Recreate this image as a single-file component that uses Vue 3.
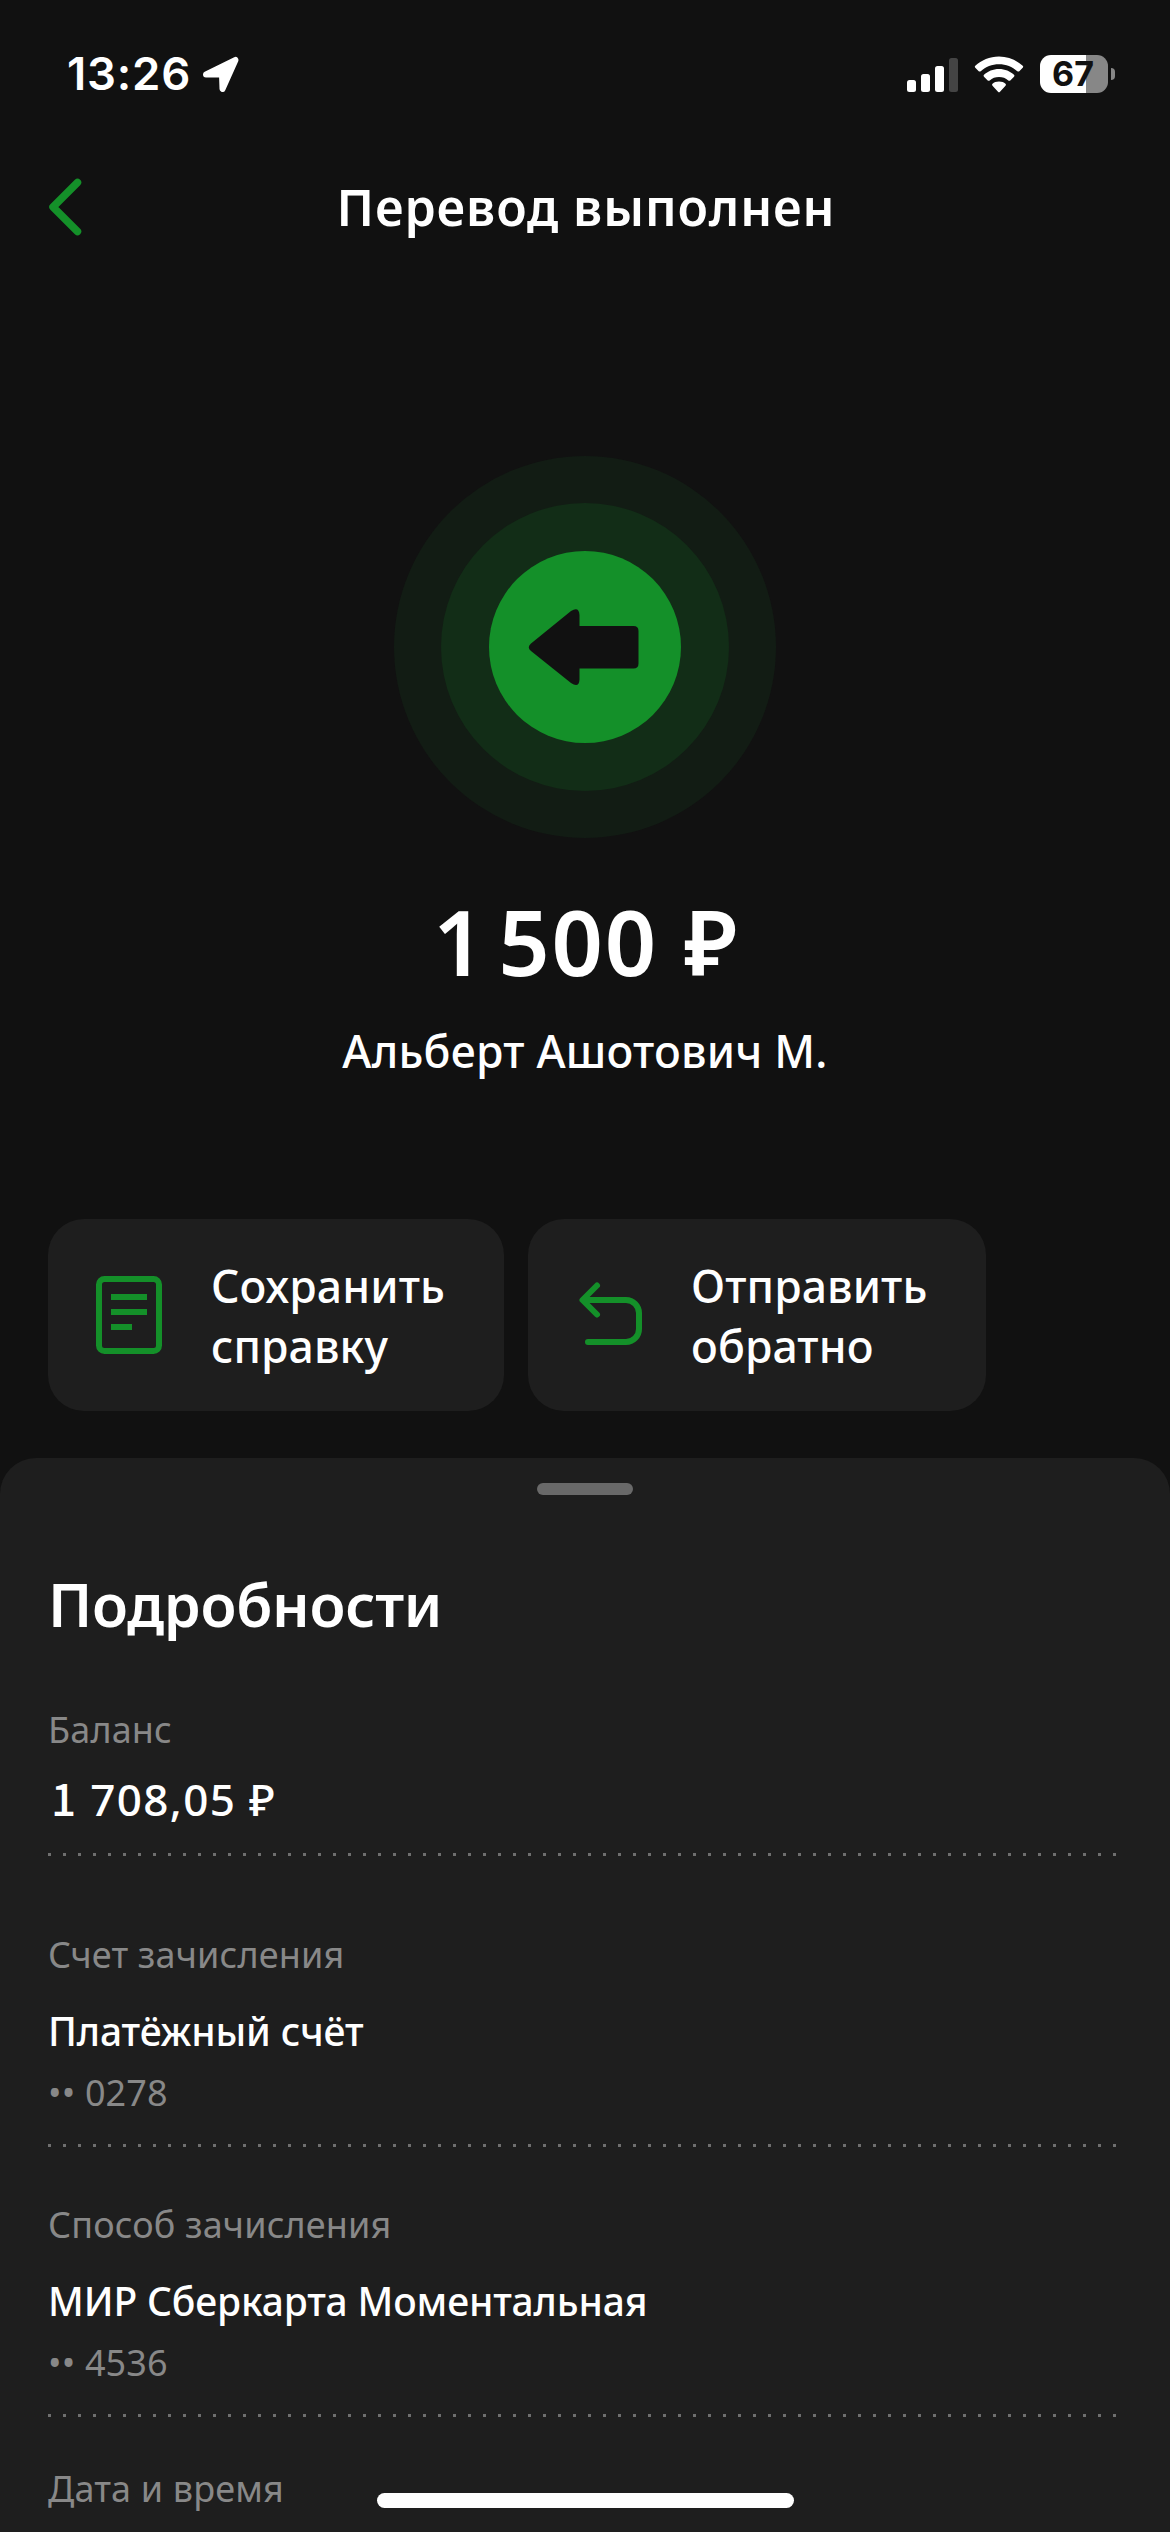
<script setup>
const actions = [
  { id: 'receipt', lines: ['Сохранить', 'справку'] },
  { id: 'return', lines: ['Отправить', 'обратно'] },
]

const accounts = [
  { label: 'Счет зачисления', value: 'Платёжный счёт', note: '•• 0278' },
  { label: 'Способ зачисления', value: 'МИР Сберкарта Моментальная', note: '•• 4536' },
]
</script>

<template>
  <main class="screen">
    <div class="status">
      <span class="clock">13:26</span>
      <svg class="locator" width="40" height="40" viewBox="0 0 40 40">
        <path d="M5 19.500 L34.500 5 L21.500 34 L21 19.500 Z" fill="#fff" stroke="#fff" stroke-width="6" stroke-linejoin="round" />
      </svg>
      <svg class="signal" width="52" height="36" viewBox="0 0 52 36">
        <rect x="0" y="24" width="9" height="12" rx="2.500" fill="#fff" />
        <rect x="14" y="18" width="9" height="18" rx="2.500" fill="#fff" />
        <rect x="28" y="10" width="9" height="26" rx="2.500" fill="#fff" />
        <rect x="42" y="2" width="9" height="34" rx="2.500" fill="#444" />
      </svg>
      <svg class="wifi" width="50" height="37" viewBox="0 0 50 37">
        <path d="M25 0.500 C34.500 0.500 42.500 4.200 48.700 9.800 Q49.700 10.800 48.700 11.800 L45.300 15.200 Q44.300 16 43.300 15.200 C38.300 10.700 32 8.200 25 8.200 C18 8.200 11.700 10.700 6.700 15.200 Q5.700 16 4.700 15.200 L1.300 11.800 Q0.300 10.800 1.300 9.800 C7.500 4.200 15.500 0.500 25 0.500 Z" fill="#fff" />
        <path d="M25 13 C31 13 36.200 15.300 40 18.800 Q41 19.800 40 20.800 L36.300 24.400 Q35.300 25.300 34.300 24.400 C31.800 22.200 28.600 21 25 21 C21.400 21 18.200 22.200 15.700 24.400 Q14.700 25.300 13.700 24.400 L10 20.800 Q9 19.800 10 18.800 C13.800 15.300 19 13 25 13 Z" fill="#fff" />
        <path d="M25 25.600 C27.800 25.600 29.900 26.500 31.500 27.800 Q32.500 28.700 31.500 29.700 L26 35.700 Q25 36.700 24 35.700 L18.500 29.700 Q17.500 28.700 18.500 27.800 C20.100 26.500 22.200 25.600 25 25.600 Z" fill="#fff" />
      </svg>
      <div class="battery"><span>67</span></div>
      <i class="battery-tip"></i>
    </div>

    <header class="header">
      <svg class="back" width="40" height="60" viewBox="0 0 40 60">
        <path d="M33.500 5.500 L9 30 L33.500 54.500" fill="none" stroke="#149029" stroke-width="7.500" stroke-linecap="round" stroke-linejoin="round" />
      </svg>
      <h1>Перевод выполнен</h1>
    </header>

    <section class="hero">
      <svg width="384" height="384" viewBox="0 0 384 384">
        <circle cx="192" cy="192" r="191" fill="#121c14" />
        <circle cx="192" cy="192" r="144" fill="#122d17" />
        <circle cx="192" cy="192" r="96" fill="#149029" />
        <path d="M138 188.500 L178 156 Q186 151 186.500 160 V171 H240.500 Q245.500 171 245.500 176 V208.500 Q245.500 213.500 240.500 213.500 H186.500 V224.500 Q186 233.500 178 228 L138 196 Q133.500 192.300 138 188.500 Z" fill="#111" />
      </svg>
      <p class="amount"><span class="thousands">1</span> <span class="hundreds">500</span> ₽</p>
      <p class="person">Альберт Ашотович М.</p>
    </section>

    <div class="actions">
      <button v-for="action in actions" :key="action.id" class="action" :class="action.id">
        <svg width="96" height="96" viewBox="0 0 96 96" fill="none" stroke="#149029" stroke-width="6">
          <template v-if="action.id === 'receipt'">
            <rect x="15" y="12" width="60" height="72" rx="5.500" />
            <path d="M27 30 H63 M27 45 H63 M27 60 H48" />
          </template>
          <path v-else d="M33 18.500 L18.500 33 L33 47.500 M20 33 H62 A13 13 0 0 1 75 46 V62 A13 13 0 0 1 62 75 H24" stroke-linecap="round" stroke-linejoin="round" />
        </svg>
        <span class="caption">
          <span v-for="line in action.lines" :key="line">{{ line }}</span>
        </span>
      </button>
    </div>

    <section class="sheet">
      <div class="handle"></div>
      <h2>Подробности</h2>

      <div class="balance">
        <p class="label">Баланс</p>
        <p class="money"><span class="one">1</span> 708,05 ₽</p>
        <div class="dots"></div>
      </div>

      <div v-for="account in accounts" :key="account.label" class="account">
        <p class="label">{{ account.label }}</p>
        <p class="value">{{ account.value }}</p>
        <p class="note">{{ account.note }}</p>
        <div class="dots"></div>
      </div>

      <p class="label">Дата и время</p>
    </section>

    <div class="home-indicator"></div>
  </main>
</template>

<style>
body {
  background: #111;
}
</style>

<style scoped>
.screen {
  position: relative;
  display: flex;
  flex-direction: column;
  width: 1170px;
  height: 2532px;
  overflow: hidden;
  background: #111;
  color: #fff;
  font-family: "Noto Sans", "Open Sans", sans-serif;
}

p,
h1,
h2 {
  margin: 0;
}

svg {
  display: block;
  flex: none;
}

.status {
  display: flex;
  align-items: center;
  box-sizing: border-box;
  height: 148px;
  padding: 0 55px 0 67px;
  font-family: Inter, sans-serif;
}

.clock {
  width: 134px;
  font-size: 45.5px;
  font-weight: 600;
  line-height: 60px;
  letter-spacing: 0.8px;
  white-space: nowrap;
}

.locator {
  margin-top: 2px;
}

.signal {
  margin-left: auto;
}

.wifi {
  margin-left: 15px;
}

.battery {
  display: flex;
  align-items: center;
  justify-content: center;
  width: 68px;
  height: 38px;
  margin-left: 16px;
  border-radius: 11px;
  background: linear-gradient(90deg, #fff 46px, #878787 46px);
  color: #111;
  font-size: 34px;
  font-weight: 700;
  line-height: 38px;
}

.battery span {
  margin-right: 2px;
}

.battery-tip {
  width: 4px;
  height: 12px;
  margin-left: 3px;
  border-radius: 0 5px 5px 0;
  background: #878787;
}

.header {
  display: grid;
  grid-template-columns: 120px 1fr 120px;
  align-items: center;
  height: 118px;
}

.back {
  margin-left: 44px;
}

h1 {
  padding-left: 2px;
  font-size: 50px;
  font-weight: 600;
  line-height: 64px;
  letter-spacing: 0.87px;
  text-align: center;
  white-space: nowrap;
}

.hero {
  display: flex;
  flex-direction: column;
  align-items: center;
  margin-top: 189px;
}

.amount {
  margin-top: 48px;
  font-size: 90px;
  font-weight: 600;
  line-height: 108px;
  letter-spacing: -0.3px;
}

.thousands {
  margin-right: -9px;
}

.hundreds {
  margin-right: 3px;
  letter-spacing: 1.7px;
}

.person {
  margin-top: 26px;
  font-size: 44.5px;
  font-weight: 500;
  line-height: 60px;
  letter-spacing: 0.23px;
}

.actions {
  display: flex;
  gap: 24px;
  margin: 138px 48px 0;
}

.action {
  display: flex;
  align-items: center;
  width: 456px;
  height: 192px;
  padding: 0 0 0 36px;
  border: 0;
  border-radius: 36px;
  background: #1e1e1e;
  color: inherit;
  font: 500 44.5px/60px "Noto Sans", "Open Sans", sans-serif;
  text-align: left;
}

.action.return {
  width: 458px;
}

.caption {
  display: flex;
  flex-direction: column;
  margin-left: 31px;
  padding-top: 2px;
  letter-spacing: 0.1px;
}

.sheet {
  flex: 1;
  margin-top: 47px;
  padding: 25px 48px 0;
  border-radius: 36px 36px 0 0;
  background: #1e1e1e;
}

.handle {
  width: 96px;
  height: 12px;
  margin: 0 auto;
  border-radius: 6px;
  background: #696969;
}

h2 {
  margin: 73px 0 68px;
  font-size: 59px;
  font-weight: 600;
  line-height: 72px;
  letter-spacing: -0.3px;
}

.label,
.note {
  color: #888;
  font-size: 36px;
  line-height: 44px;
  letter-spacing: 0.15px;
}

.money {
  margin-top: 21px;
  padding-left: 3px;
  font-size: 44px;
  font-weight: 500;
  line-height: 52px;
  letter-spacing: 1.35px;
}

.one {
  font-family: "Noto Sans CJK JP", sans-serif;
  line-height: 1;
}

.value {
  margin-top: 28px;
  font-size: 39px;
  font-weight: 500;
  line-height: 52px;
  letter-spacing: -0.15px;
}

.note {
  margin-top: 14px;
}

.dots {
  width: 1071px;
  height: 3px;
  margin-top: 29px;
  background: repeating-linear-gradient(90deg, #6f6f6f 0 3px, transparent 3px 15px);
}

.balance {
  margin-bottom: 77px;
}

.balance .dots {
  margin-top: 28px;
}

.account {
  margin-bottom: 56px;
}

.account:last-of-type {
  margin-bottom: 50px;
}

.home-indicator {
  position: absolute;
  bottom: 24px;
  left: 377px;
  width: 417px;
  height: 15px;
  border-radius: 8px;
  background: #fff;
}
</style>
